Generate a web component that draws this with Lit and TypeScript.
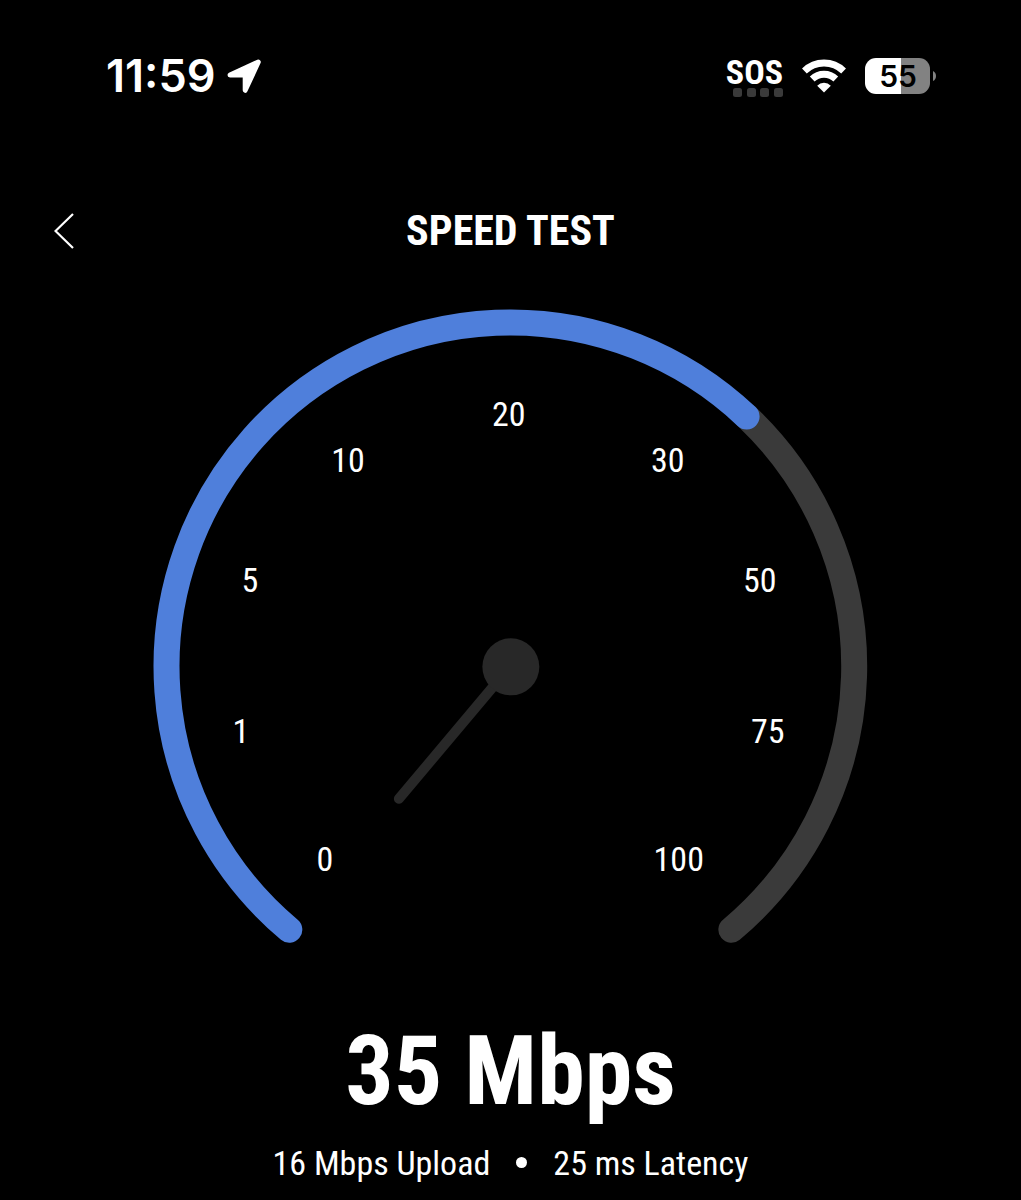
import { LitElement, html, svg, css } from "lit";
import { customElement, property } from "lit/decorators.js";

interface Tick {
  label: string;
  x: number;
  y: number;
}

const TICKS: Tick[] = [
  { label: "0", x: 325, y: 871 },
  { label: "1", x: 241, y: 743 },
  { label: "5", x: 250, y: 592 },
  { label: "10", x: 348, y: 472 },
  { label: "20", x: 509, y: 426 },
  { label: "30", x: 668, y: 472 },
  { label: "50", x: 760, y: 592 },
  { label: "75", x: 768, y: 743 },
  { label: "100", x: 679, y: 871 },
];

const CENTER_X = 510.5;
const CENTER_Y = 666.5;
const RADIUS = 344;
const START = -140;
const END = 140;
const VALUE = 43.4;

/** Point on the dial, with the angle in degrees clockwise from the top. */
function dialPoint(angle: number): string {
  const a = (angle * Math.PI) / 180;
  const x = CENTER_X + RADIUS * Math.sin(a);
  const y = CENTER_Y - RADIUS * Math.cos(a);
  return `${x.toFixed(2)} ${y.toFixed(2)}`;
}

function dialArc(from: number, to: number): string {
  const large = to - from > 180 ? 1 : 0;
  return `M${dialPoint(from)}A${RADIUS} ${RADIUS} 0 ${large} 1 ${dialPoint(to)}`;
}

@customElement("status-bar")
export class StatusBar extends LitElement {
  static styles = css`
    :host {
      display: flex;
      justify-content: space-between;
      align-items: center;
      height: 48px;
      padding: 52px 84px 0 106px;
      color: #fff;
    }
    .side {
      display: flex;
      align-items: center;
    }
    .time {
      font: 600 45px/48px Inter, "Liberation Sans", sans-serif;
      margin-right: 10px;
    }
    .carrier {
      display: flex;
      flex-direction: column;
      align-items: flex-end;
      margin-right: 19px;
    }
    .sos {
      font: 700 34px/32px "Roboto Condensed", "Liberation Sans Narrow", Roboto, sans-serif;
    }
    svg {
      display: block;
    }
    .wifi {
      margin-right: 19px;
    }
    .level {
      font: 600 30px Inter, "Liberation Sans", sans-serif;
    }
  `;

  render() {
    return html`
      <div class="side">
        <span class="time">11:59</span>
        <svg width="36" height="36" viewBox="0 0 36 36" aria-hidden="true">
          <path
            d="M4 17 32.300 4 19.200 32.300V17.100Z"
            fill="#fff" stroke="#fff" stroke-width="5" stroke-linejoin="round"
          />
        </svg>
      </div>
      <div class="side">
        <div class="carrier">
          <span class="sos">SOS</span>
          <svg width="50" height="9" viewBox="0 0 50 9" aria-hidden="true">
            ${[0, 14, 27, 41].map(
              (x) => svg`<rect x=${x} width="9" height="9" rx="2.5" fill="#3a3a3a" />`
            )}
          </svg>
        </div>
        <svg class="wifi" width="44" height="34" viewBox="0 0 44 34" aria-hidden="true">
          <g fill="none" stroke="#fff" stroke-width="6.800">
            <path d="M2.400 12A28 28 0 0 1 41.600 12" />
            <path d="M10.200 20A17 17 0 0 1 33.800 20" />
          </g>
          <path d="M22 33.500 15.200 26.700A9.500 9.500 0 0 1 28.800 26.700Z" fill="#fff" />
        </svg>
        <svg width="72" height="36" viewBox="0 0 72 36" role="img" aria-label="Battery 55%">
          <path d="M11 0H36V36H11A11 11 0 0 1 0 25V11A11 11 0 0 1 11 0Z" fill="#fff" />
          <path d="M36 0H54A11 11 0 0 1 65 11V25A11 11 0 0 1 54 36H36Z" fill="#828282" />
          <path d="M68 13Q71 14.500 71 18T68 23Z" fill="#828282" />
          <text class="level" x="33" y="29" text-anchor="middle">55</text>
        </svg>
      </div>
    `;
  }
}

@customElement("speed-gauge")
export class SpeedGauge extends LitElement {
  static styles = css`
    :host {
      display: block;
      width: 70%;
      margin: 0 auto;
    }
    svg {
      display: block;
      width: 100%;
      height: auto;
    }
    .arc {
      fill: none;
      stroke-width: 26px;
      stroke-linecap: round;
    }
    .track {
      stroke: #3a3a3a;
    }
    .value {
      stroke: #4f7fdb;
    }
    .hub {
      fill: #282828;
    }
    .needle {
      stroke: #282828;
      stroke-width: 10px;
      stroke-linecap: round;
    }
    .tick {
      font: 400 34px "Roboto Condensed", "Liberation Sans Narrow", Roboto, sans-serif;
      fill: #fff;
      text-anchor: middle;
    }
  `;

  render() {
    return html`
      <svg viewBox="153 309 715 635" role="img" aria-label="Speed gauge">
        <path class="arc track" d=${dialArc(VALUE, END)} />
        <path class="arc value" d=${dialArc(START, VALUE)} />
        <line class="needle" x1="510" y1="667" x2="399" y2="799" />
        <circle class="hub" cx="511" cy="667" r="28.500" />
        ${TICKS.map(
          (t) => svg`<text class="tick" x=${t.x} y=${t.y}>${t.label}</text>`
        )}
      </svg>
    `;
  }
}

@customElement("app-root")
export class AppRoot extends LitElement {
  @property() speed = "35 Mbps";
  @property() upload = "16 Mbps Upload";
  @property() latency = "25 ms Latency";

  static styles = css`
    :host {
      display: block;
      min-height: 100vh;
      background: #000;
      color: #fff;
      font-family: "Roboto Condensed", "Liberation Sans Narrow", Roboto, sans-serif;
    }
    .header {
      display: grid;
      grid-template-columns: 48px 1fr 48px;
      align-items: center;
      padding: 107px 40px 54px;
    }
    .back {
      display: grid;
      place-items: center;
      width: 48px;
      height: 48px;
      padding: 0;
      border: 0;
      background: none;
    }
    .title {
      margin: 0;
      font-size: 42px;
      line-height: 48px;
      font-weight: 700;
      text-align: center;
    }
    .result {
      padding-top: 72px;
      text-align: center;
    }
    .speed {
      margin: 0;
      font-size: 96px;
      line-height: 110px;
      font-weight: 700;
    }
    .details {
      display: flex;
      justify-content: center;
      align-items: center;
      gap: 26px;
      padding-top: 16px;
      font-size: 34px;
      line-height: 42px;
      font-weight: 400;
    }
    .dot {
      width: 11px;
      height: 11px;
      border-radius: 50%;
      background: #fff;
    }
  `;

  render() {
    return html`
      <status-bar></status-bar>
      <header class="header">
        <button class="back" aria-label="Back">
          <svg width="20" height="36" viewBox="0 0 20 36" aria-hidden="true">
            <path d="M19 1 1.500 18 19 35" fill="none" stroke="#fff" stroke-width="2.200" />
          </svg>
        </button>
        <h1 class="title">SPEED TEST</h1>
      </header>
      <main>
        <speed-gauge></speed-gauge>
        <section class="result">
          <p class="speed">${this.speed}</p>
          <div class="details">
            <span>${this.upload}</span>
            <span class="dot"></span>
            <span>${this.latency}</span>
          </div>
        </section>
      </main>
    `;
  }
}
